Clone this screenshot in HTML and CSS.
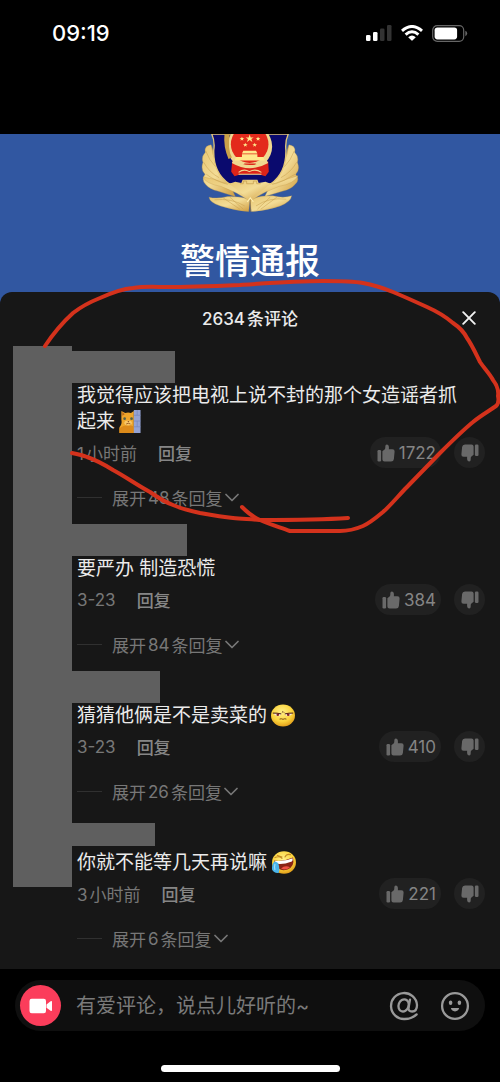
FILE: index.html
```html
<!DOCTYPE html>
<html lang="zh-CN">
<head>
    <meta charset="UTF-8">
    <meta name="viewport" content="width=device-width, initial-scale=1.0">
    <title>评论</title>
    <link rel="stylesheet" href="styles.css">
</head>
<body>
    <!-- shared icons -->
    <svg class="defs" width="0" height="0" aria-hidden="true">
        <symbol id="thumb-up" viewBox="0 0 18 18">
            <rect x="0.5" y="6" width="3.6" height="11.5" rx="1.2"/>
            <path d="M5.4 7.2 L7.6 5.6 Q8.3 5 8.3 3.6 V2.4 Q8.3 .5 9.8 .5 Q11.6 .5 11.9 2.8 V5.2 H15.4 Q17.8 5.2 17.6 7.4 L16.9 15 Q16.6 17.5 14 17.5 H7.6 Q5.4 17.5 5.4 15.6 Z"/>
        </symbol>
        <symbol id="chevron" viewBox="0 0 14 9">
            <path d="M1 1.5 L7 7.5 L13 1.5" fill="none" stroke="currentColor" stroke-width="1.7" stroke-linecap="round" stroke-linejoin="round"/>
        </symbol>
        <linearGradient id="gold" x1="0" y1="0" x2="1" y2="1">
            <stop offset="0" stop-color="#e8c671"/>
            <stop offset="0.5" stop-color="#f3dc96"/>
            <stop offset="1" stop-color="#cf9c40"/>
        </linearGradient>
        <radialGradient id="face" cx="0.45" cy="0.35" r="0.7">
            <stop offset="0" stop-color="#fff08a"/>
            <stop offset="0.6" stop-color="#fbd43c"/>
            <stop offset="1" stop-color="#dd9414"/>
        </radialGradient>
    </svg>

    <header class="status">
        <time>09:19</time>
        <div class="status-icons">
            <svg width="26" height="16" viewBox="0 0 26 16">
                <rect x="0" y="10" width="4.5" height="6" rx="1.3" fill="#fff"/>
                <rect x="7" y="7" width="4.5" height="9" rx="1.3" fill="#fff"/>
                <rect x="14" y="3.5" width="4.5" height="12.5" rx="1.3" fill="#333"/>
                <rect x="21" y="0" width="4.5" height="16" rx="1.3" fill="#333"/>
            </svg>
            <svg width="22" height="16" viewBox="0 0 22 16">
                <g fill="none" stroke="#fff" stroke-width="3">
                    <path d="M1 5.8 Q11 -2.8 21 5.8"/>
                    <path d="M4.6 9.6 Q11 4 17.4 9.6"/>
                </g>
                <path d="M7.2 12.2 Q11 9 14.8 12.2 L11.7 15.3 Q11 16 10.3 15.3 Z" fill="#fff"/>
            </svg>
            <svg width="36" height="17" viewBox="0 0 36 17">
                <rect x="0.7" y="0.7" width="31" height="15.6" rx="4.5" fill="none" stroke="#666" stroke-width="1.2"/>
                <rect x="2.6" y="2.6" width="22.5" height="11.8" rx="2.8" fill="#fff"/>
                <path d="M33.3 5.8 Q35.2 6.6 35.2 8.5 Q35.2 10.4 33.3 11.2 Z" fill="#666"/>
            </svg>
        </div>
    </header>

    <section class="video">
        <svg class="badge" width="98" height="78" viewBox="120 12 292 232" role="img" aria-label="警徽">
            <!-- wreath -->
            <g fill="url(#gold)" stroke="#c39a4a" stroke-width="1">
                <path d="M150 44 Q128 48 133 66 Q120 80 126 96 Q118 118 132 132 Q120 148 134 162 Q146 176 170 182 L222 198 L200 150 L166 96 Z"/>
                <path d="M382 44 Q404 48 399 66 Q412 80 407 96 Q416 118 402 132 Q416 148 400 162 Q388 176 364 182 L310 198 L334 150 L368 96 Z"/>
                <path d="M144 200 Q146 216 178 226 Q222 240 262 243 L266 206 Q232 196 200 198 Q166 206 144 200 Z"/>
                <path d="M390 196 Q388 214 356 226 Q316 240 270 243 L266 206 Q300 194 334 196 Q366 204 390 196 Z"/>
                <path d="M126 140 Q134 160 180 168 Q226 184 262 210 L270 210 Q306 184 352 168 Q398 160 409 136 Q372 146 344 160 L310 160 L290 150 H244 L222 160 L190 158 Q160 144 126 140 Z"/>
            </g>
            <g fill="none" stroke="#c59c4b" stroke-width="1.5">
                <path d="M134 62 Q144 90 164 110 M128 96 Q144 126 174 142 M136 132 Q162 152 200 162 M152 48 Q152 70 164 92"/>
                <path d="M398 62 Q388 90 368 110 M405 96 Q388 126 358 142 M400 132 Q370 152 332 162 M380 48 Q380 70 368 92"/>
                <path d="M160 208 Q210 202 250 226 M374 206 Q322 200 284 226 M186 202 L236 236 M206 200 L246 236 M346 200 L298 236 M326 200 L288 236"/>
            </g>
            <!-- shield -->
            <path d="M152 12 Q162 34 158 60 Q156 128 204 160 L222 166 H308 L328 160 Q374 128 373 60 Q370 34 380 12 Z" fill="#0a0a6e" stroke="#e5c777" stroke-width="4"/>
            <path d="M204 160 L222 154 L240 158 L244 148 H288 L292 158 L312 154 L328 160 Q300 182 267 208 Q232 182 204 160 Z" fill="url(#gold)"/>
            <path d="M236 160 H246 V152 H256 V160 H276 V152 H286 V160 H298" fill="none" stroke="#c39a4a" stroke-width="2"/>
            <circle cx="265" cy="49" r="67" fill="#f0d890"/>
            <path d="M190 12 H206 Q198 56 212 82 L202 86 Q186 50 190 12 Z" fill="#caa049"/>
            <circle cx="265" cy="42" r="56" fill="#e32a1c"/>
            <path d="M265 13 l3 9 h9 l-7 5 3 9 -8 -6 -8 6 3 -9 -7 -5 h9 Z" fill="#ffe98c"/>
            <g fill="#ffe98c">
                <path d="M242 20 l2 4 h5 l-4 3 1 5 -4 -3 -4 3 1 -5 -4 -3 h5 Z M290 20 l2 4 h5 l-4 3 1 5 -4 -3 -4 3 1 -5 -4 -3 h5 Z"/>
                <path d="M252 38 l2 4 h5 l-4 3 1 5 -4 -3 -4 3 1 -5 -4 -3 h5 Z M280 38 l2 4 h5 l-4 3 1 5 -4 -3 -4 3 1 -5 -4 -3 h5 Z"/>
                <path d="M246 62 H284 L288 70 H242 Z M242 72 H288 V80 H242 Z M224 80 H306 L310 91 H220 Z"/>
            </g>
            <!-- ribbon and gear -->
            <path d="M213 92 Q224 106 240 106 L250 100 H282 L292 106 Q310 104 320 92 L322 124 L312 138 L292 132 H238 L220 138 L210 124 Z" fill="#dc2419"/>
            <path d="M214 94 Q266 124 318 94" fill="none" stroke="#f0d890" stroke-width="9"/>
            <path d="M232 126 Q248 114 264 124 Q282 114 300 126 M232 132 H300" fill="none" stroke="#f0d890" stroke-width="3"/>
            <path d="M267 206 V243" stroke="#a07a34" stroke-width="2"/>
            <path d="M258 214 L267 202 L276 214" fill="none" stroke="#fff0b5" stroke-width="3"/>
        </svg>
        <h1>警情通报</h1>
    </section>

    <main class="sheet">
        <div class="sheet-head">
            <h2><span>2634</span>条评论</h2>
            <button class="close" aria-label="关闭">
                <svg width="14" height="14" viewBox="0 0 14 14"><path d="M1.2 1.2 L12.8 12.8 M12.8 1.2 L1.2 12.8" stroke="#f2f2f2" stroke-width="1.9" stroke-linecap="round"/></svg>
            </button>
        </div>

        <div class="list">
            <div class="avatar-mask"></div>

            <article class="comment">
                <div class="name name-1"></div>
                <p>我觉得应该把电视上说不封的那个女造谣者抓起来<svg class="emoji emoji-cat" width="22" height="24" viewBox="0 0 22 24">
                    <path d="M2 1 L6 3 Q9 2 12 3 L15 1 V24 H0 V18 Q3 15 2 10 Z" fill="#eda52b"/>
                    <path d="M0 19 Q6 14 15 17 V24 H0 Z" fill="#dc8a1a"/>
                    <path d="M3 2 L5.5 4.5 L3 6 Z" fill="#b9651a"/>
                    <ellipse cx="9" cy="13.5" rx="4" ry="2.6" fill="#f8c766"/>
                    <circle cx="5.4" cy="9" r="1.4" fill="#4f604c"/>
                    <circle cx="12.6" cy="9" r="1.4" fill="#4f604c"/>
                    <path d="M8.3 11.6 H10.2 L9.3 12.8 Z" fill="#7c3b16"/>
                    <path d="M7 14.6 Q9.3 13 11.5 14.6" stroke="#8b4718" stroke-width="0.8" fill="none"/>
                    <rect x="15" y="0" width="7" height="24" fill="#95a3d4"/>
                    <path d="M15 5.5 H22 M15 11.5 H22 M15 17.5 H22 M18.5 0 V5.5 M18.5 11.5 V17.5" stroke="#7485bb" stroke-width="0.7"/>
                </svg></p>
                <div class="meta">
                    <time><span>1</span>小时前</time>
                    <button class="reply">回复</button>
                    <button class="like"><svg width="18" height="18"><use href="#thumb-up"/></svg>1722</button>
                    <button class="dislike" aria-label="不喜欢"><svg width="18" height="18"><use href="#thumb-up"/></svg></button>
                </div>
                <button class="expand">展开<span>48</span>条回复<svg width="14" height="9"><use href="#chevron"/></svg></button>
            </article>

            <article class="comment">
                <div class="name name-2"></div>
                <p>要严办 制造恐慌</p>
                <div class="meta">
                    <time>3-23</time>
                    <button class="reply">回复</button>
                    <button class="like"><svg width="18" height="18"><use href="#thumb-up"/></svg>384</button>
                    <button class="dislike" aria-label="不喜欢"><svg width="18" height="18"><use href="#thumb-up"/></svg></button>
                </div>
                <button class="expand">展开<span>84</span>条回复<svg width="14" height="9"><use href="#chevron"/></svg></button>
            </article>

            <article class="comment">
                <div class="name name-3"></div>
                <p>猜猜他俩是不是卖菜的<svg class="emoji" width="24" height="22" viewBox="0 0 24 22">
                    <ellipse cx="12" cy="11" rx="12" ry="11" fill="url(#face)"/>
                    <path d="M2.4 8.8 H10 Q9.6 11.8 6.6 11.6 Q3.6 11.4 2.4 8.8 Z M21.6 8.8 H14 Q14.4 11.8 17.4 11.6 Q20.4 11.4 21.6 8.8 Z" fill="#f7e3dc"/>
                    <path d="M1.8 8.6 Q6 8.4 10.2 9.4 M22.2 8.6 Q18 8.4 13.8 9.4" fill="none" stroke="#4a1d10" stroke-width="1"/>
                    <circle cx="6.8" cy="10.2" r="1.3" fill="#7e2520"/>
                    <circle cx="17.2" cy="10.2" r="1.3" fill="#7e2520"/>
                    <path d="M10.8 8.2 L12 7 L13.2 8.2 M8.6 14.6 Q10.2 13.8 12 14.8 Q13.8 13.8 15.4 14.6" fill="none" stroke="#70410f" stroke-width="0.9"/>
                </svg></p>
                <div class="meta">
                    <time>3-23</time>
                    <button class="reply">回复</button>
                    <button class="like"><svg width="18" height="18"><use href="#thumb-up"/></svg>410</button>
                    <button class="dislike" aria-label="不喜欢"><svg width="18" height="18"><use href="#thumb-up"/></svg></button>
                </div>
                <button class="expand">展开<span>26</span>条回复<svg width="14" height="9"><use href="#chevron"/></svg></button>
            </article>

            <article class="comment">
                <div class="name name-4"></div>
                <p>你就不能等几天再说嘛<svg class="emoji" width="25" height="23" viewBox="0 0 25 23">
                    <ellipse cx="13" cy="11.5" rx="12" ry="11.2" fill="url(#face)"/>
                    <path d="M3 9.5 Q12 11 22 6.5 Q24 15.5 16.5 18.5 Q8 21 5 14 Z" fill="#8a2415"/>
                    <path d="M3.8 9.8 Q13 11 21.6 7.2 Q22 9.6 20.8 10.4 Q12 13.8 5 12.6 Z" fill="#fff"/>
                    <path d="M10 17.6 Q14 13.6 19 16.2 Q14.6 20 10 17.6 Z" fill="#ef5345"/>
                    <path d="M4 6.6 Q8 4.6 11 7.4 M14 6 Q15.5 2.6 19.5 3.6 M6.4 4.4 L11 6" fill="none" stroke="#c58a24" stroke-width="1.1" stroke-linecap="round"/>
                    <path d="M3.4 10.6 Q7.6 11 8 15 Q9 19.4 7.6 22 Q3 22.6 1 18.6 Q.6 13.4 3.4 10.6 Z" fill="#49b4ea"/>
                    <path d="M4 13 Q3 15.5 4 19" stroke="#9fdcf8" stroke-width="1.2" fill="none"/>
                </svg></p>
                <div class="meta">
                    <time><span>3</span>小时前</time>
                    <button class="reply">回复</button>
                    <button class="like"><svg width="18" height="18"><use href="#thumb-up"/></svg>221</button>
                    <button class="dislike" aria-label="不喜欢"><svg width="18" height="18"><use href="#thumb-up"/></svg></button>
                </div>
                <button class="expand">展开<span>6</span>条回复<svg width="14" height="9"><use href="#chevron"/></svg></button>
            </article>
        </div>
    </main>

    <footer class="bottom">
        <form class="composer">
            <button type="button" class="record" aria-label="视频评论">
                <svg width="24" height="16" viewBox="0 0 24 16" fill="#fff">
                    <rect x="0.5" y="0.8" width="16.5" height="14.4" rx="2.2"/>
                    <path d="M17.5 6.4 L21.6 3.2 Q23 2.4 23 4 V12 Q23 13.6 21.6 12.8 L17.5 9.8 Z"/>
                </svg>
            </button>
            <input type="text" aria-label="评论" placeholder="有爱评论，说点儿好听的~">
            <button type="button" class="tool" aria-label="提及">
                <svg width="30" height="30" viewBox="0 0 30 30" fill="none" stroke="#999" stroke-width="2.3" stroke-linecap="round">
                    <path d="M27.6 23.4 Q23 28 15.5 28 A13 13 0 1 1 28 14 Q28 20.5 23.2 20.5 Q19 20.5 19.6 16.6 L21 8.6"/>
                    <ellipse cx="14.6" cy="14.4" rx="5" ry="6.2" transform="rotate(20 14.6 14.4)"/>
                </svg>
            </button>
            <button type="button" class="tool" aria-label="表情">
                <svg width="30" height="30" viewBox="0 0 30 30">
                    <circle cx="15" cy="15" r="12.9" fill="none" stroke="#999" stroke-width="2.3"/>
                    <ellipse cx="10.6" cy="11.8" rx="1.8" ry="2.3" fill="#999"/>
                    <ellipse cx="19.4" cy="11.8" rx="1.8" ry="2.3" fill="#999"/>
                    <path d="M11.6 17 H18.4 Q19.4 17 19 18 Q17.6 20.4 15 20.4 Q12.4 20.4 11 18 Q10.6 17 11.6 17 Z" fill="#999"/>
                </svg>
            </button>
        </form>
        <div class="home-bar"></div>
    </footer>

    <!-- hand drawn circle on top of everything -->
    <svg class="scribble" viewBox="0 0 500 1082" aria-hidden="true">
        <path d="M45 346 C53 334 62 323 73 313 C82 306 90 302 100 298 C111 293 122 289 133 288 C145 286 156 287 167 287 C190 287 215 286 240 285 C268 283 295 281 323 281 C340 281 352 281 363 283 C374 285 383 288 393 292 C405 297 416 302 427 307 C436 311 446 317 453 323 C459 327 464 332 467 338 C472 345 476 354 480 362 C484 368 490 374 493 380 C497 385 499 390 498 396 C499 400 499 403 496 406 C489 411 480 416 473 422 C462 431 451 442 440 453 L407 487 C399 495 391 505 383 512 C377 517 370 523 363 526 C356 529 348 531 340 531 H290 C279 527 269 524 260 520 C253 517 247 512 242 507"/>
        <path d="M72 453 C77 454 82 455 87 457 C96 460 105 465 113 470 C126 477 137 485 150 492 C157 497 165 502 173 505 C182 509 191 511 200 513 C211 515 222 517 233 518 C242 519 251 519 260 520 C290 520 319 520 348 518"/>
    </svg>
</body>
</html>
```
FILE: styles.css
```css
* {
    box-sizing: border-box;
}

body {
    position: relative;
    margin: 0;
    background: #000;
    color: #ebebeb;
    font-family: Inter, "Noto Sans CJK SC", sans-serif;
    font-size: 17px;
}

h1, h2, p {
    margin: 0;
}

svg {
    display: block;
    flex: none;
}

button {
    display: flex;
    align-items: center;
    justify-content: center;
    padding: 0;
    border: none;
    background: none;
    color: inherit;
    font: inherit;
    cursor: pointer;
}

.defs {
    position: absolute;
}

/* status bar */
.status {
    display: flex;
    justify-content: space-between;
    align-items: flex-start;
    padding: 20px 32px 88px 52px;
}

.status time {
    font-size: 22px;
    font-weight: 500;
    line-height: 26px;
    color: #fff;
}

.status-icons {
    display: flex;
    align-items: center;
    gap: 9px;
    height: 26px;
}

/* video behind the sheet */
.video {
    display: flex;
    flex-direction: column;
    align-items: center;
    gap: 25px;
    padding-bottom: 20px;
    background: #3157a1;
}

.video h1 {
    font-size: 35px;
    font-weight: 500;
    line-height: 48px;
    color: #fff;
}

/* comment sheet */
.sheet {
    margin-top: -13px;
    padding-bottom: 18px;
    background: #171717;
    border-radius: 12px 12px 0 0;
}

.sheet-head {
    display: grid;
    grid-template-columns: 44px 1fr 44px;
    align-items: center;
    height: 51px;
    margin-bottom: 8px;
    padding: 0 9px;
}

.sheet-head h2 {
    grid-column: 2;
    text-align: center;
    font-size: 17px;
    font-weight: 500;
}

.sheet-head span {
    margin-right: 2px;
}

.close {
    height: 44px;
}

.list {
    position: relative;
    display: flex;
    flex-direction: column;
    gap: 14px;
}

/* covers the avatars */
.avatar-mask {
    position: absolute;
    top: -5px;
    bottom: 64px;
    left: 13px;
    width: 59px;
    background: #5f5f5f;
}

.comment {
    padding: 0 15px 0 77px;
}

/* covers the user names */
.name {
    height: 32px;
    margin-left: -5px;
    background: #5f5f5f;
}

.name-1 {
    width: 103px;
}

.name-2 {
    width: 115px;
}

.name-3 {
    width: 88px;
}

.name-4 {
    width: 83px;
    height: 23px;
    margin-top: 5px;
    margin-bottom: 4px;
}

.comment p {
    padding-right: 15px;
    font-size: 19px;
    line-height: 26px;
}

.emoji {
    display: inline-block;
    height: 23px;
    margin-left: 4px;
    vertical-align: -5px;
}

.meta {
    display: flex;
    align-items: center;
    height: 31px;
    margin-top: 2px;
    color: #777;
}

.meta time span {
    margin-right: 2px;
}

.reply {
    margin: 0 auto 0 21px;
    color: #868686;
    font-weight: 500;
}

.like {
    gap: 4px;
    height: 31px;
    padding: 0 5px 0 7px;
    border-radius: 16px;
    background: #212121;
    color: #858585;
}

.like svg,
.dislike svg {
    fill: #696969;
}

.dislike {
    width: 31px;
    height: 31px;
    margin-left: 13px;
    border-radius: 50%;
    background: #212121;
}

.dislike svg {
    transform: rotate(180deg);
}

.expand {
    height: 25px;
    margin-top: 17px;
    color: #777;
}

.expand::before {
    content: "";
    width: 25px;
    height: 1px;
    margin-right: 10px;
    background: #303030;
}

.expand span {
    margin: 0 2px;
}

.expand svg {
    margin-left: 2px;
}

/* input bar */
.bottom {
    display: flex;
    flex-direction: column;
    align-items: center;
    gap: 34px;
    padding: 11px 15px 10px;
}

.composer {
    display: flex;
    align-items: center;
    width: 100%;
    height: 51px;
    padding: 0 15px 0 5px;
    border-radius: 26px;
    background: #0f0f0f;
}

.record {
    flex: none;
    width: 41px;
    height: 41px;
    border-radius: 50%;
    background: #fb3d5b;
}

.composer input {
    flex: 1;
    min-width: 0;
    height: 40px;
    padding: 0 0 0 15px;
    border: none;
    outline: none;
    background: none;
    color: #f0f0f0;
    font: inherit;
    font-size: 20px;
}

.composer input::placeholder {
    color: #7a7a7a;
    opacity: 1;
}

.tool {
    flex: none;
    margin-left: 21px;
}

.home-bar {
    width: 179px;
    height: 7px;
    border-radius: 4px;
    background: #fff;
}

.scribble {
    position: absolute;
    top: 0;
    left: 0;
    width: 100%;
    fill: none;
    stroke: #d4321c;
    stroke-width: 4;
    stroke-linecap: round;
    stroke-linejoin: round;
    pointer-events: none;
}
```
